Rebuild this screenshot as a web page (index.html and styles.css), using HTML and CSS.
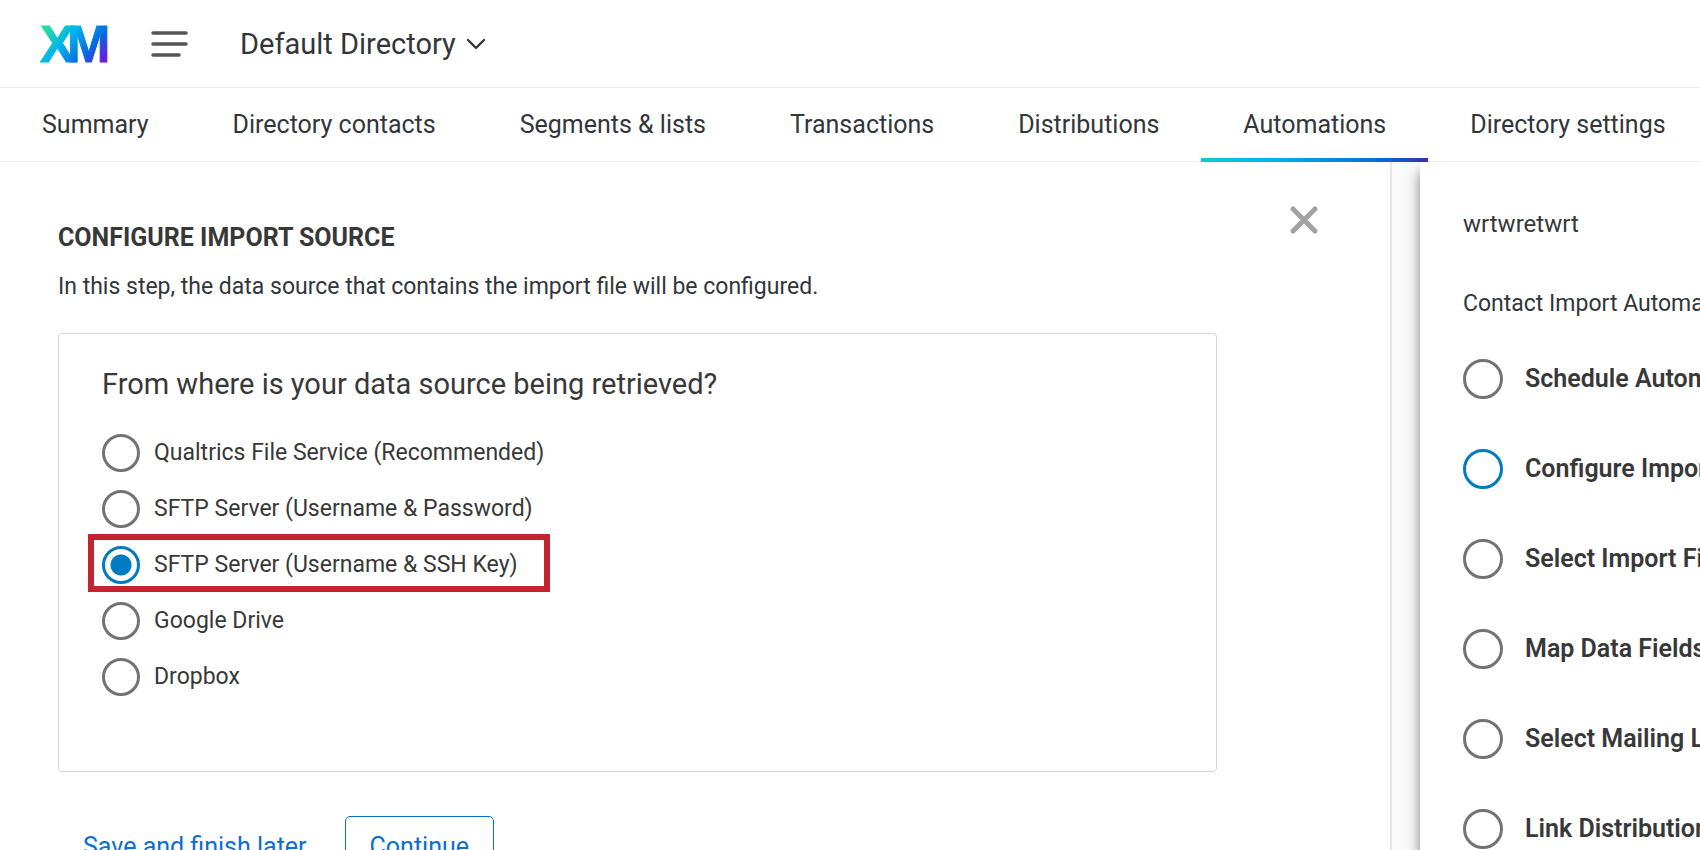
FILE: index.html
```html
<!DOCTYPE html>
<html lang="en">
<head>
    <meta charset="UTF-8">
    <meta name="viewport" content="width=device-width, initial-scale=1.0">
    <title>Default Directory - Automations</title>
    <link rel="stylesheet" href="styles.css">
</head>
<body>
    <header class="topbar">
        <a href="#" class="logo" aria-label="XM home">
            <svg width="68" height="38" viewBox="0 0 68 38">
                <defs>
                    <linearGradient id="xm" gradientUnits="userSpaceOnUse" x1="6" y1="-4" x2="60" y2="44">
                        <stop offset="0" stop-color="#2ae58d"/>
                        <stop offset="0.38" stop-color="#00b4ef"/>
                        <stop offset="0.72" stop-color="#0768dd"/>
                        <stop offset="0.95" stop-color="#6a1be0"/>
                    </linearGradient>
                </defs>
                <g fill="url(#xm)" stroke="url(#xm)">
                    <text class="logo-text" x="0" y="37">X</text>
                    <text class="logo-text" x="27" y="37">M</text>
                </g>
            </svg>
        </a>
        <button class="menu" aria-label="Menu">
            <svg width="37" height="26" viewBox="0 0 37 26" stroke="#54565b" stroke-width="3.5" stroke-linecap="round">
                <path d="M2 2h33M2 13h33M2 24h26"/>
            </svg>
        </button>
        <button class="directory">
            Default Directory
            <svg width="20" height="12" viewBox="0 0 20 12" fill="none" stroke="#32363a" stroke-width="2.4" stroke-linecap="round" stroke-linejoin="round">
                <path d="M2 2l8 8 8-8"/>
            </svg>
        </button>
    </header>

    <nav class="tabs">
        <a href="#">Summary</a>
        <a href="#">Directory contacts</a>
        <a href="#">Segments &amp; lists</a>
        <a href="#">Transactions</a>
        <a href="#">Distributions</a>
        <a href="#" class="active">Automations</a>
        <a href="#">Directory settings</a>
    </nav>

    <div class="workspace">
        <main class="content">
            <button class="close" aria-label="Close">
                <svg width="28" height="28" viewBox="0 0 28 28" stroke="#a3a3a3" stroke-width="5" stroke-linecap="round">
                    <path d="M3 3l22 22M25 3L3 25"/>
                </svg>
            </button>
            <h1>CONFIGURE IMPORT SOURCE</h1>
            <p class="intro">In this step, the data source that contains the import file will be configured.</p>

            <fieldset class="card">
                <legend class="question">From where is your data source being retrieved?</legend>
                <label class="option"><input type="radio" name="source"><span>Qualtrics File Service (Recommended)</span></label>
                <label class="option"><input type="radio" name="source"><span>SFTP Server (Username &amp; Password)</span></label>
                <label class="option highlight"><input type="radio" name="source" checked><span>SFTP Server (Username &amp; SSH Key)</span></label>
                <label class="option"><input type="radio" name="source"><span>Google Drive</span></label>
                <label class="option"><input type="radio" name="source"><span>Dropbox</span></label>
            </fieldset>

            <div class="actions">
                <button class="btn-link">Save and finish later</button>
                <button class="btn">Continue</button>
            </div>
        </main>

        <aside class="sidebar">
            <p class="name">wrtwretwrt</p>
            <p class="type">Contact Import Automation</p>
            <ol class="steps">
                <li>Schedule Automation</li>
                <li class="current">Configure Import Source</li>
                <li>Select Import File</li>
                <li>Map Data Fields</li>
                <li>Select Mailing List</li>
                <li>Link Distribution</li>
            </ol>
        </aside>
    </div>
</body>
</html>
```
FILE: styles.css
```css
* {
    box-sizing: border-box;
}

body {
    margin: 0;
    height: 100vh;
    overflow: hidden;
    display: flex;
    flex-direction: column;
    font-family: Roboto, "Liberation Sans", sans-serif;
    font-size: 23px;
    line-height: 32px;
    color: #32363a;
    background-color: #fff;
}

button {
    padding: 0;
    border: none;
    background: none;
    font: inherit;
    color: inherit;
    cursor: pointer;
}

svg {
    display: block;
}

.topbar {
    flex: none;
    display: flex;
    align-items: center;
    height: 88px;
    padding-left: 40px;
    border-bottom: 1px solid #ebebeb;
}

.logo svg {
    overflow: visible;
}

.logo-text {
    font-family: "Liberation Sans", sans-serif;
    font-weight: bold;
    font-size: 52px;
}

.menu {
    margin-left: 43px;
}

.directory {
    display: flex;
    align-items: center;
    gap: 10px;
    margin-left: 52px;
    font-size: 29px;
}

.tabs {
    flex: none;
    display: flex;
    height: 74px;
    border-bottom: 1px solid #ebebeb;
    font-size: 25px;
    white-space: nowrap;
}

.tabs a {
    height: 74px;
    padding: 21px 42px 0;
    border-bottom: 4px solid transparent;
    color: inherit;
    text-decoration: none;
}

.tabs a.active {
    border-image: linear-gradient(to right, #12cbc4, #00b4ef 30%, #0768dd 80%, #3a2fb0) 1;
    border-image-width: 0 0 4px;
}

.workspace {
    flex: 1;
    display: flex;
    min-height: 0;
    background-color: #fafafa;
    overflow: hidden;
}

.content {
    position: relative;
    flex: 1;
    margin-right: 28px;
    padding: 60px 173px 0 58px;
    border-right: 2px solid #e6e6e6;
    background-color: #fff;
}

.close {
    position: absolute;
    top: 44px;
    right: 72px;
}

h1 {
    margin: 0 0 17px;
    font-size: 25px;
    font-weight: 700;
    color: #383838;
}

.intro {
    margin: 0 0 30px;
}

.card {
    min-height: 439px;
    margin: 0;
    padding: 34px 43px;
    border: 1px solid #d5d5d5;
    border-radius: 4px;
    color: #383838;
}

.question {
    float: left;
    width: 100%;
    margin-bottom: 25px;
    padding: 0;
    font-size: 29px;
}

.option {
    clear: both;
    display: flex;
    align-items: center;
    gap: 14px;
    width: fit-content;
    height: 56px;
}

.option input {
    appearance: none;
    width: 38px;
    height: 38px;
    margin: 0;
    border: 3px solid #737373;
    border-radius: 50%;
}

.option input:checked {
    border-color: #007ac0;
    background: radial-gradient(circle, #007ac0 10px, transparent 11px);
}

/* red callout frame around the option */
.highlight {
    position: relative;
}

.highlight::after {
    content: "";
    position: absolute;
    inset: -3px -32px 1px -14px;
    border: 6px solid #c42330;
}

.actions {
    display: flex;
    gap: 38px;
    margin-top: 44px;
    padding-left: 25px;
    font-size: 25px;
    color: #0b6ed0;
}

.btn {
    height: 62px;
    padding: 0 24px;
    border: 1px solid #0b6ed0;
    border-radius: 5px;
}

.sidebar {
    flex: none;
    width: 280px;
    padding: 46px 0 0 43px;
    background-color: #fff;
    box-shadow: 0 10px 12px rgba(0, 0, 0, 0.5);
    color: #383838;
    white-space: nowrap;
    overflow: hidden;
}

.name {
    margin: 0 0 48px;
    font-size: 24px;
}

.type {
    margin: 0 0 39px;
    color: #32363a;
}

.steps {
    display: grid;
    gap: 50px;
    margin: 0;
    padding: 0;
    list-style: none;
    font-size: 25px;
    font-weight: 600;
}

.steps li {
    display: flex;
    align-items: center;
    gap: 22px;
}

.steps li::before {
    content: "";
    flex: none;
    box-sizing: border-box;
    width: 40px;
    height: 40px;
    border: 3px solid #737373;
    border-radius: 50%;
}

.steps .current::before {
    border-color: #007ac0;
}
```
